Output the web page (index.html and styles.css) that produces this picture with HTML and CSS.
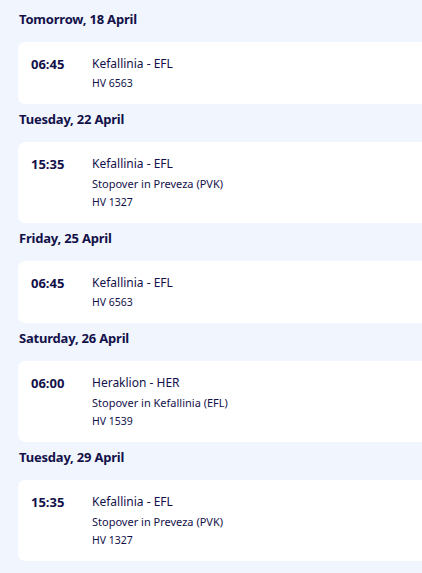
FILE: index.html
```html
<!DOCTYPE html>
<html>
<head>
<meta charset="utf-8">
<link rel="stylesheet" href="styles.css">
</head>
<body>
<div class="list">
  <section class="day">
    <h2 class="day-title">Tomorrow, 18 April</h2>
    <div class="card">
      <div class="time">06:45</div>
      <div class="info">
        <div class="route">Kefallinia - EFL</div>
        <div class="flight">HV 6563</div>
      </div>
    </div>
  </section>
  <section class="day">
    <h2 class="day-title">Tuesday, 22 April</h2>
    <div class="card">
      <div class="time">15:35</div>
      <div class="info">
        <div class="route">Kefallinia - EFL</div>
        <div class="stop">Stopover in Preveza (PVK)</div>
        <div class="flight">HV 1327</div>
      </div>
    </div>
  </section>
  <section class="day">
    <h2 class="day-title">Friday, 25 April</h2>
    <div class="card">
      <div class="time">06:45</div>
      <div class="info">
        <div class="route">Kefallinia - EFL</div>
        <div class="flight">HV 6563</div>
      </div>
    </div>
  </section>
  <section class="day">
    <h2 class="day-title">Saturday, 26 April</h2>
    <div class="card">
      <div class="time">06:00</div>
      <div class="info">
        <div class="route">Heraklion - HER</div>
        <div class="stop">Stopover in Kefallinia (EFL)</div>
        <div class="flight">HV 1539</div>
      </div>
    </div>
  </section>
  <section class="day">
    <h2 class="day-title">Tuesday, 29 April</h2>
    <div class="card">
      <div class="time">15:35</div>
      <div class="info">
        <div class="route">Kefallinia - EFL</div>
        <div class="stop">Stopover in Preveza (PVK)</div>
        <div class="flight">HV 1327</div>
      </div>
    </div>
  </section>
</div>
</body>
</html>
```

FILE: styles.css
```css
html, body {
  margin: 0;
  padding: 0;
  background: #f1f5fd;
  overflow: hidden;
}
body {
  font-family: "Noto Sans", "Open Sans", sans-serif;
  color: #13114a;
}
.list {
  display: flex;
  flex-direction: column;
  gap: 6px;
  padding: 10px 0 0 18px;
}
.day-title {
  margin: 0 0 14px 1px;
  font-size: 13px;
  line-height: 18px;
  font-weight: 700;
  letter-spacing: -0.2px;
}
.card {
  background: #ffffff;
  border-radius: 7px 0 0 7px;
  padding: 12px 13px;
  display: flex;
  align-items: flex-start;
}
.time {
  width: 61px;
  flex: none;
  font-size: 13px;
  line-height: 20px;
  font-weight: 700;
}
.info {
  display: flex;
  flex-direction: column;
}
.route {
  font-size: 12px;
  line-height: 20px;
}
.stop {
  font-size: 11px;
  line-height: 19px;
}
.flight {
  font-size: 10.5px;
  line-height: 18px;
}
```
